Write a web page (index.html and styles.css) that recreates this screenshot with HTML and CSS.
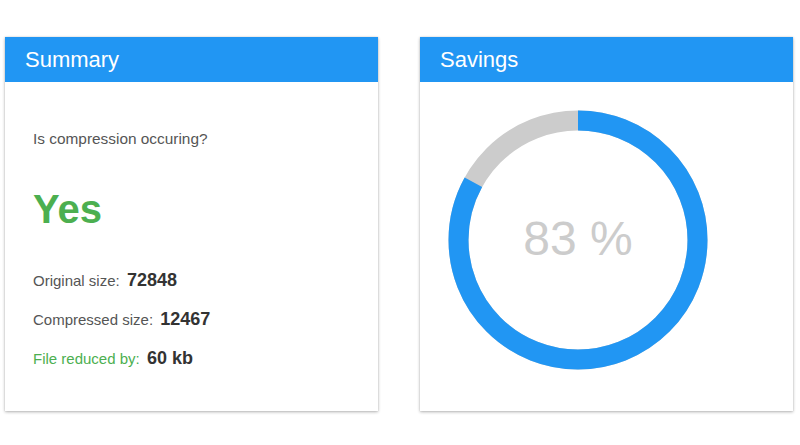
FILE: index.html
```html
<!DOCTYPE html>
<html lang="en">
<head>
    <meta charset="UTF-8">
    <meta name="viewport" content="width=device-width, initial-scale=1.0">
    <title>Compression</title>
    <link rel="stylesheet" href="styles.css">
</head>
<body>

    <div class="dashboard">
        <div class="card">
            <div class="card-header">Summary</div>
            <div class="card-body summary">
                <p class="question">Is compression occuring?</p>
                <p class="answer">Yes</p>
                <p class="stat">Original size: <b>72848</b></p>
                <p class="stat">Compressed size: <b>12467</b></p>
                <p class="stat reduced">File reduced by: <b>60 kb</b></p>
            </div>
        </div>

        <div class="card">
            <div class="card-header">Savings</div>
            <div class="card-body savings">
                <svg class="ring" width="260" height="260" viewBox="0 0 260 260">
                    <circle cx="130" cy="130" r="119.5" fill="none" stroke="#cccccc" stroke-width="20"/>
                    <circle cx="130" cy="130" r="119.5" fill="none" stroke="#2196f3" stroke-width="20"
                            stroke-dasharray="623.2 750.84" transform="rotate(-90 130 130)"/>
                    <text x="130" y="145" text-anchor="middle" class="ring-label">83 %</text>
                </svg>
            </div>
        </div>
    </div>

</body>
</html>
```

FILE: styles.css
```css
html, body {
    height: 100%;
}
body {
    margin: 0;
    min-height: 445px;
    font-family: "Liberation Sans", Arial, sans-serif;
    background: #fff;
}
.dashboard {
    display: grid;
    grid-template-columns: 373px 373px;
    column-gap: 42px;
    padding: 37px 0 34px 5px;
}
.card {
    height: 374px;
    display: flex;
    flex-direction: column;
    background: #fff;
    box-shadow: 0 1px 3px rgba(0, 0, 0, 0.3), 0 0 1px rgba(0, 0, 0, 0.15);
}
.card-header {
    height: 45px;
    line-height: 45px;
    padding-left: 20px;
    background-color: #2196f3;
    color: #fff;
    font-size: 22px;
}
.card-body {
    flex: 1;
}
.summary {
    padding: 48px 28px 0 28px;
}
.summary p {
    margin: 0;
}
.question {
    font-size: 15.4px;
    line-height: 18px;
    color: #555;
}
.answer {
    margin-top: 41px !important;
    font-size: 40px;
    line-height: 40px;
    font-weight: bold;
    color: #4caf50;
}
.stat {
    margin-top: 16px !important;
    font-size: 15px;
    line-height: 22px;
    color: #555;
}
.answer + .stat {
    margin-top: 40px !important;
}
.stat b {
    font-size: 18px;
    color: #333;
    margin-left: 3px;
}
.reduced {
    color: #4caf50;
}
.savings {
    padding: 28px 0 0 28px;
}
.ring {
    display: block;
}
.ring-label {
    font-family: "Liberation Sans", Arial, sans-serif;
    font-size: 48px;
    fill: #cccccc;
}
```
